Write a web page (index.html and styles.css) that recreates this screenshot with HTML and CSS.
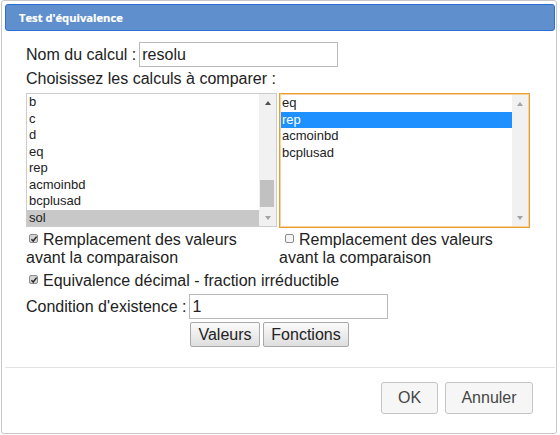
FILE: index.html
```html
<!DOCTYPE html>
<html lang="fr">
<head>
<meta charset="utf-8">
<title>Test d'équivalence</title>
<link rel="stylesheet" href="styles.css">
</head>
<body>
<div class="dialog">
  <div class="titlebar"><span class="title">Test d'équivalence</span></div>
  <div class="content">
    <div class="field-row">
      <span class="label">Nom du calcul :</span>
      <input class="text-input" type="text" value="resolu" readonly>
    </div>
    <div class="line">Choisissez les calculs à comparer :</div>
    <div class="lists">
      <div class="listbox">
        <div class="options">
          <div class="opt">b</div>
          <div class="opt">c</div>
          <div class="opt">d</div>
          <div class="opt">eq</div>
          <div class="opt">rep</div>
          <div class="opt">acmoinbd</div>
          <div class="opt">bcplusad</div>
          <div class="opt opt-inactive">sol</div>
        </div>
        <div class="scrollbar">
          <div class="sb-btn"><span class="arrow-up"></span></div>
          <div class="sb-track"><div class="sb-thumb"></div></div>
          <div class="sb-btn"><span class="arrow-down"></span></div>
        </div>
      </div>
      <div class="listbox listbox-focus">
        <div class="options">
          <div class="opt">eq</div>
          <div class="opt opt-selected">rep</div>
          <div class="opt">acmoinbd</div>
          <div class="opt">bcplusad</div>
        </div>
        <div class="scrollbar scrollbar-disabled">
          <div class="sb-btn"><span class="arrow-up"></span></div>
          <div class="sb-track"></div>
          <div class="sb-btn"><span class="arrow-down"></span></div>
        </div>
      </div>
    </div>
    <div class="checks">
      <div class="check-col"><span class="cb cb-checked"><svg viewBox="0 0 8 8" width="8" height="8"><path d="M1.4 4.2 L3.2 6 L6.6 1.6" fill="none" stroke="#2a2a2a" stroke-width="1.5"/></svg></span>Remplacement des valeurs avant la comparaison</div>
      <div class="check-col check-col-right"><span class="cb"></span>Remplacement des valeurs avant la comparaison</div>
    </div>
    <div class="check-line"><span class="cb cb-checked"><svg viewBox="0 0 8 8" width="8" height="8"><path d="M1.4 4.2 L3.2 6 L6.6 1.6" fill="none" stroke="#2a2a2a" stroke-width="1.5"/></svg></span>Equivalence décimal - fraction irréductible</div>
    <div class="field-row cond-row">
      <span class="label">Condition d'existence :</span>
      <input class="text-input" type="text" value="1" readonly>
    </div>
    <div class="btn-row">
      <button class="btn btn-valeurs" type="button">Valeurs</button>
      <button class="btn btn-fonctions" type="button">Fonctions</button>
    </div>
  </div>
  <div class="footer">
    <button class="fbtn fbtn-ok" type="button">OK</button>
    <button class="fbtn fbtn-cancel" type="button">Annuler</button>
  </div>
</div>
</body>
</html>
```
FILE: styles.css
```css
html, body {
  margin: 0;
  padding: 0;
  background: #ffffff;
}

.dialog {
  box-sizing: border-box;
  width: 556px;
  height: 434px;
  margin-left: 1px;
  border: 1px solid #c8c8c8;
  border-radius: 3px;
  padding: 3px 1px 0 3px;
  display: flex;
  flex-direction: column;
  font-family: "Liberation Sans", Arial, sans-serif;
  font-size: 16px;
  color: #222222;
  background: #ffffff;
}

.titlebar {
  box-sizing: border-box;
  height: 27px;
  background: #5f8fcc;
  border: 1px solid #2f6fd3;
  border-radius: 3px;
  display: flex;
  align-items: center;
  padding-left: 13px;
}

.title {
  color: #ffffff;
  font-family: "Open Sans", "Liberation Sans", sans-serif;
  font-weight: 700;
  font-size: 11.2px;
  -webkit-text-stroke: 0.2px #ffffff;
}

.content {
  flex: 1;
  padding: 11px 0 0 21px;
}

.field-row {
  display: flex;
  align-items: center;
  height: 25px;
}

.label {
  white-space: pre;
  margin-right: 3px;
}

.text-input {
  box-sizing: border-box;
  width: 199px;
  height: 25px;
  margin: 0;
  border: 1px solid #b9b9b9;
  border-radius: 0;
  padding: 0 2px;
  font-family: "Liberation Sans", Arial, sans-serif;
  font-size: 16px;
  color: #222222;
  background: #ffffff;
  outline: none;
}

.line {
  margin-top: 3px;
  line-height: 18px;
}

.lists {
  display: flex;
  align-items: flex-start;
  gap: 2px;
  margin-top: 5px;
}

.listbox {
  box-sizing: border-box;
  width: 251px;
  height: 134px;
  border: 1px solid #cccccc;
  display: flex;
  background: #ffffff;
}

.listbox-focus {
  height: 135px;
  border: 1px solid #e89e2c;
  box-shadow: inset 0 0 0 1px #f6d39c;
}

.options {
  flex: 1;
  font-size: 13px;
  overflow: hidden;
}

.listbox-focus .options {
  padding: 1px 0 0 1px;
}

.opt {
  height: 16.5px;
  line-height: 15.5px;
  padding: 0 2px;
  box-sizing: border-box;
  white-space: nowrap;
}

.listbox-focus .opt {
  padding-left: 1px;
}

.opt-inactive {
  background: #c8c8c8;
}

.opt-selected {
  background: #1e90ff;
  color: #ffffff;
}

.scrollbar {
  width: 17px;
  display: flex;
  flex-direction: column;
  background: #f1f1f1;
}

.listbox-focus .scrollbar {
  margin: 1px 1px 1px 0;
  width: 16px;
}

.sb-btn {
  height: 17px;
  display: flex;
  align-items: center;
  justify-content: center;
}

.sb-track {
  flex: 1;
  position: relative;
}

.sb-thumb {
  position: absolute;
  left: 1px;
  right: 2px;
  top: 69px;
  height: 27px;
  background: #c1c1c1;
}

.arrow-up {
  width: 0;
  height: 0;
  border-left: 3.5px solid transparent;
  border-right: 3.5px solid transparent;
  border-bottom: 4px solid #505050;
}

.arrow-down {
  width: 0;
  height: 0;
  border-left: 3.5px solid transparent;
  border-right: 3.5px solid transparent;
  border-top: 4px solid #a3a3a3;
}

.scrollbar-disabled .arrow-up {
  border-bottom-color: #a3a3a3;
}

.checks {
  display: flex;
  gap: 2px;
  margin-top: 3px;
}

.check-col {
  width: 251px;
  line-height: 18px;
}

.cb {
  display: inline-block;
  box-sizing: border-box;
  width: 9px;
  height: 9px;
  margin: 0 5px 0 3px;
  border: 1px solid #8c8c8c;
  border-radius: 2px;
  background: #f4f4f4;
  vertical-align: 2px;
  position: relative;
}

.check-col-right .cb {
  margin-left: 6px;
}

.cb-checked {
  background: #d4d4d4;
}

.cb svg {
  position: absolute;
  left: -0.5px;
  top: -0.5px;
}

.check-line {
  margin-top: 5px;
  line-height: 18px;
}

.cond-row {
  margin-top: 4px;
}

.btn-row {
  display: flex;
  gap: 3px;
  margin-top: 3px;
  padding-left: 164px;
}

.btn {
  box-sizing: border-box;
  height: 25px;
  margin: 0;
  padding: 0;
  border: 1px solid #a9a9a9;
  border-radius: 2px;
  background: linear-gradient(#fbfbfb, #dedede);
  font-family: "Liberation Sans", Arial, sans-serif;
  font-size: 16px;
  color: #222222;
}

.btn-valeurs {
  width: 70px;
}

.btn-fonctions {
  width: 86px;
}

.footer {
  border-top: 1px solid #e3e3e3;
  padding: 14px 22px 19px 0;
  display: flex;
  justify-content: flex-end;
  gap: 7px;
}

.fbtn {
  box-sizing: border-box;
  height: 32px;
  margin: 0;
  padding: 0;
  border: 1px solid #c5c5c5;
  border-radius: 3px;
  background: #f6f6f6;
  font-family: "Liberation Sans", Arial, sans-serif;
  font-size: 16px;
  color: #454545;
}

.fbtn-ok {
  width: 57px;
}

.fbtn-cancel {
  width: 88px;
}
```
